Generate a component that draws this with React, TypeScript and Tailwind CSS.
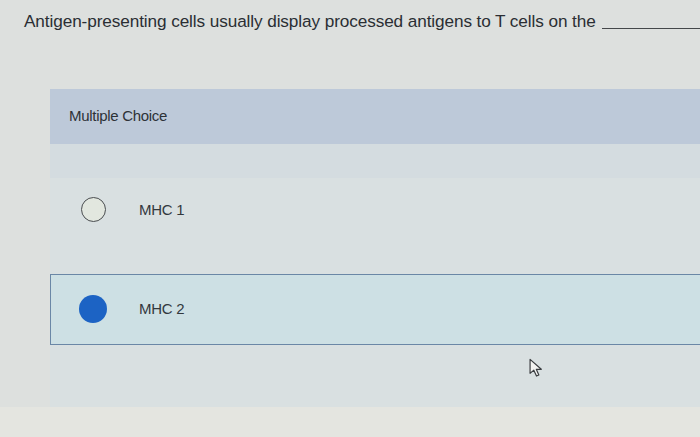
import { useState } from "react";

const choices = ["MHC 1", "MHC 2"];

function Radio({ checked }: { checked: boolean }) {
  return checked ? (
    <span className="block h-[28px] w-[28px] rounded-full bg-[#1c63c4]" />
  ) : (
    <span className="block h-[25px] w-[25px] rounded-full border-[1.5px] border-[#4a4d50] bg-[#e2e7df]" />
  );
}

function Cursor() {
  return (
    <svg width="15" height="20" viewBox="0 0 14 18" className="absolute left-[529px] top-[358px]">
      <path
        d="M1 1 L1 14 L4.5 11 L7 16.5 L9.2 15.5 L6.8 10.2 L11.5 10.2 Z"
        fill="#f4f4f2"
        stroke="#3a3d40"
        strokeWidth="1.1"
        strokeLinejoin="round"
      />
    </svg>
  );
}

export default function App() {
  const [selected, setSelected] = useState(1);

  return (
    <div
      className="relative h-[437px] w-[700px] overflow-hidden bg-[#dde0de] text-[#2a2e33]"
      style={{ fontFamily: '"Liberation Sans", Arial, sans-serif' }}
    >
      <div className="flex items-end pl-[24px] pt-[9px]">
        <p className="text-[17.2px] tracking-[-0.1px]">
          Antigen-presenting cells usually display processed antigens to T cells on the
        </p>
        <span className="mb-[6px] ml-[6px] h-px flex-1 bg-[#44474a]" />
      </div>

      <div className="ml-[50px] mt-[54px]">
        <div className="flex h-[55px] items-center bg-[#bdc9d9] pl-[19px]">
          <span className="text-[15px] tracking-[-0.3px] text-[#2d3237]">Multiple Choice</span>
        </div>

        <div className="h-[34px] bg-[#d4dce0]" />
        <div className="flex flex-col bg-[#d9e0e1] pb-[62px]">
          {choices.map((label, i) => {
            const checked = selected === i;
            return (
              <button
                key={label}
                onClick={() => setSelected(i)}
                className={
                  checked
                    ? "mt-[32px] flex h-[71px] items-center border-[1.5px] border-r-0 border-[#6a87a6] bg-[#cde0e4] text-left"
                    : "flex h-[64px] items-center border-[1.5px] border-transparent text-left"
                }
              >
                <span className="flex w-[84px] justify-center">
                  <Radio checked={checked} />
                </span>
                <span className="ml-[4px] text-[15px] tracking-[-0.3px] text-[#33383d]">{label}</span>
              </button>
            );
          })}
        </div>
      </div>
      <div className="h-[40px] bg-[#e4e5e0]" />

      <Cursor />
    </div>
  );
}
